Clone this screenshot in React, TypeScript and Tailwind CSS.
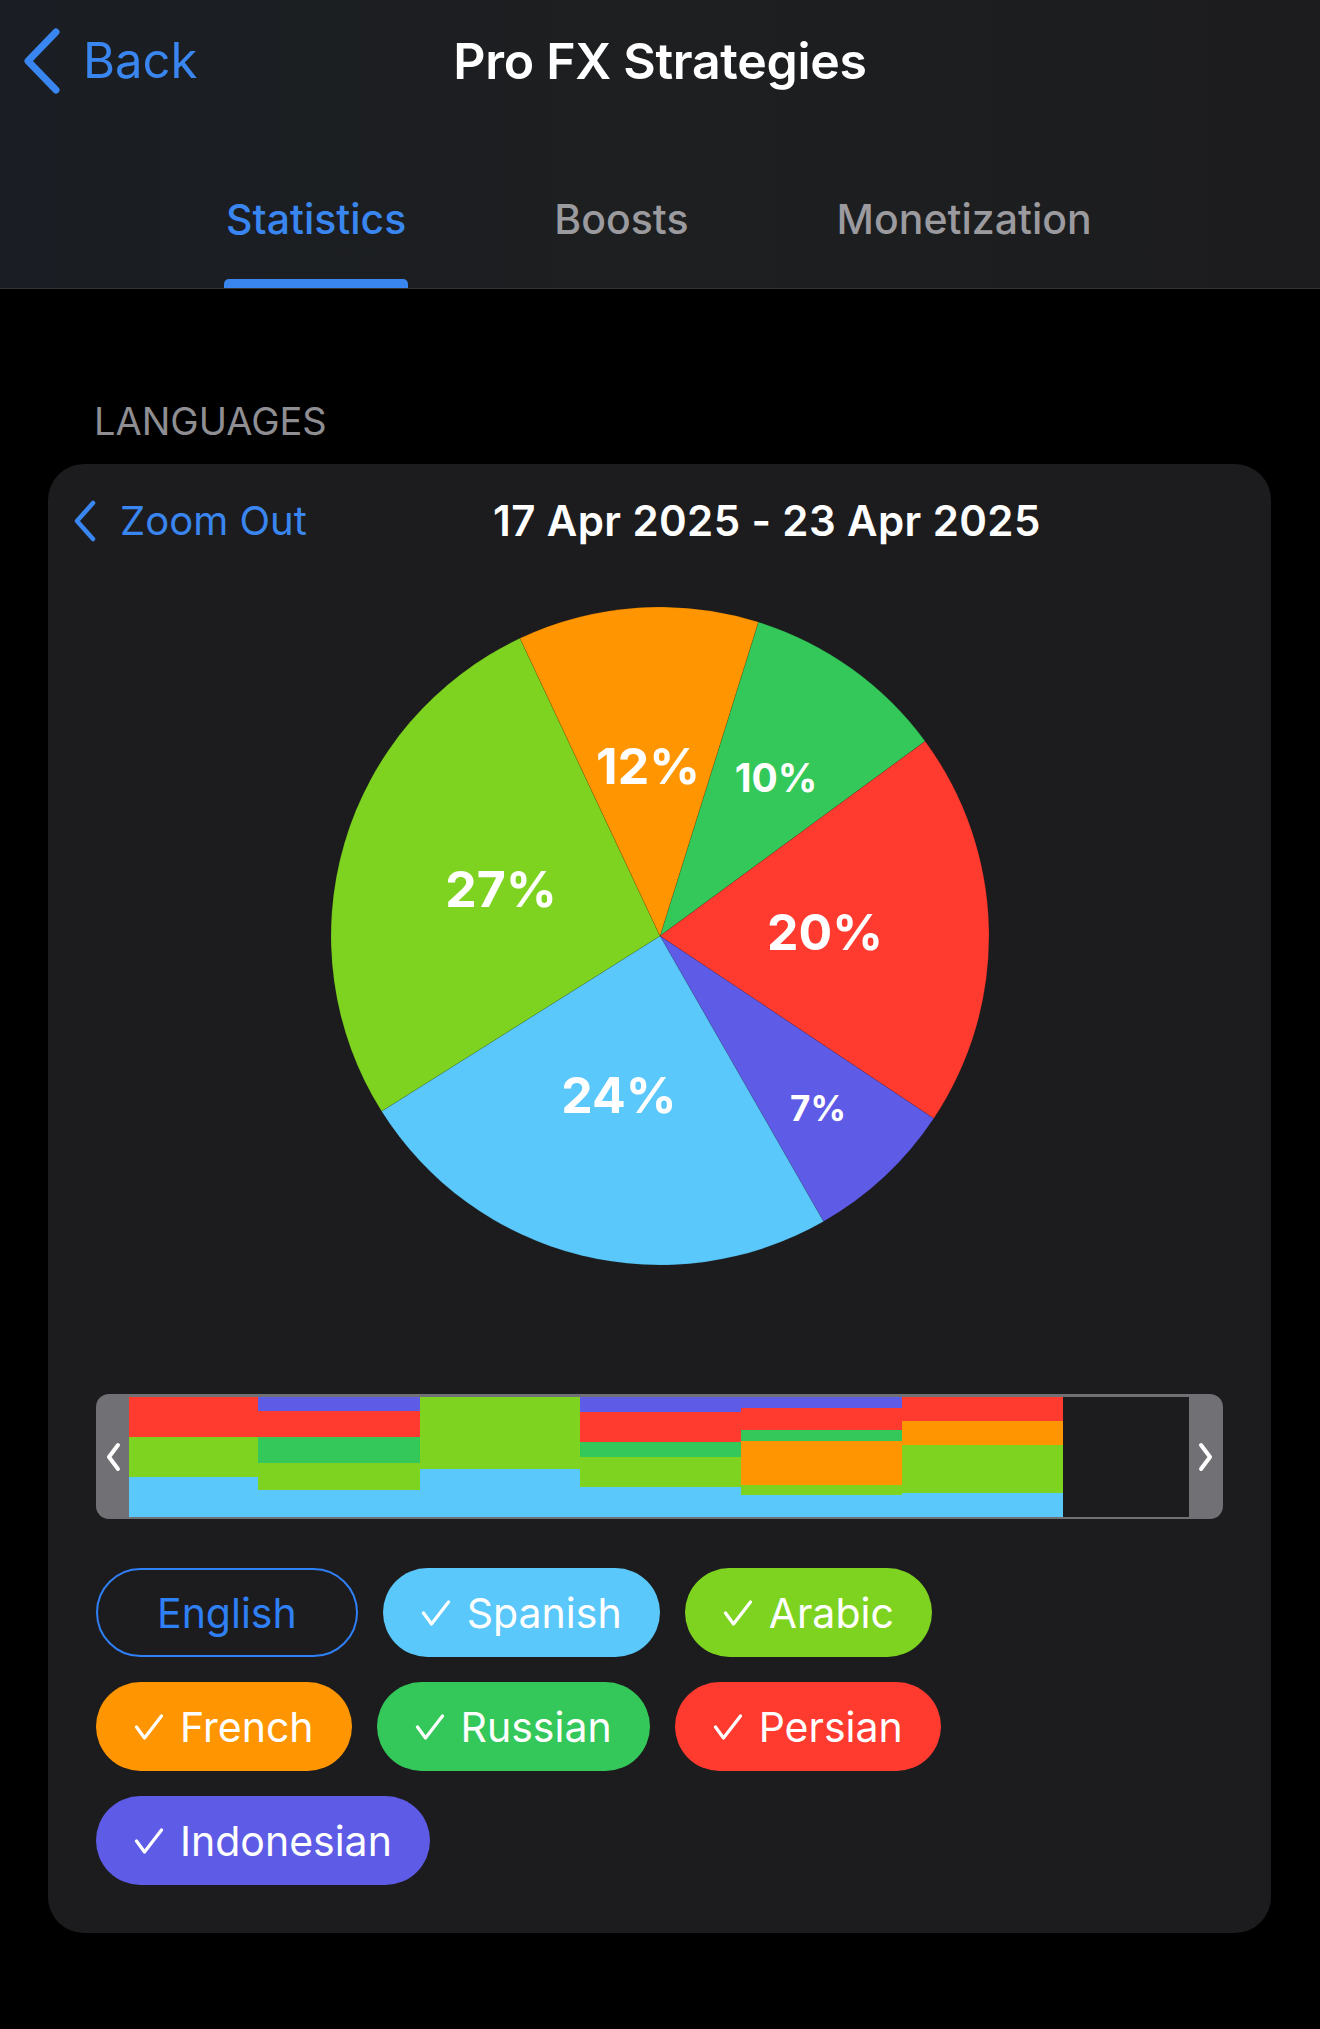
import React from "react";

const slices = [
  { color: "#34C759", from: 17.4, to: 53.7 },
  { color: "#FF3B30", from: 53.7, to: 123.7 },
  { color: "#5E5CE6", from: 123.7, to: 150.2 },
  { color: "#5AC8FA", from: 150.2, to: 237.8 },
  { color: "#7ED321", from: 237.8, to: 334.8 },
  { color: "#FF9500", from: 334.8, to: 377.4 },
];

const labels = [
  { text: "12%", x: -12, y: -152.5, size: 50 },
  { text: "10%", x: 116, y: -144.5, size: 39 },
  { text: "27%", x: -159, y: -29.5, size: 50 },
  { text: "20%", x: 165, y: 13.5, size: 50 },
  { text: "24%", x: -41, y: 176.5, size: 50 },
  { text: "7%", x: 158, y: 184.5, size: 35 },
];

const R = 329;

const point = (deg: number) => {
  const rad = (deg * Math.PI) / 180;
  return [R * Math.sin(rad), -R * Math.cos(rad)];
};

const slicePath = (from: number, to: number) => {
  const [x1, y1] = point(from);
  const [x2, y2] = point(to);
  const large = to - from > 180 ? 1 : 0;
  return `M0 0 L${x1} ${y1} A${R} ${R} 0 ${large} 1 ${x2} ${y2} Z`;
};

const C = {
  purple: "#5E5CE6",
  red: "#FF3B30",
  green: "#34C759",
  lime: "#7ED321",
  blue: "#5AC8FA",
  orange: "#FF9500",
};

const columns: { width: number; parts: [string, number][] }[] = [
  { width: 129, parts: [[C.red, 40], [C.lime, 40], [C.blue, 40]] },
  { width: 162, parts: [[C.purple, 14], [C.red, 26], [C.green, 26], [C.lime, 27], [C.blue, 27]] },
  { width: 160, parts: [[C.lime, 72], [C.blue, 48]] },
  { width: 161, parts: [[C.purple, 15], [C.red, 30], [C.green, 15], [C.lime, 30], [C.blue, 30]] },
  { width: 161, parts: [[C.purple, 11], [C.red, 22], [C.green, 11], [C.orange, 44], [C.lime, 10], [C.blue, 22]] },
  { width: 161, parts: [[C.red, 24], [C.orange, 24], [C.lime, 48], [C.blue, 24]] },
];

const chips = [
  [
    { name: "English", bg: "", selected: false },
    { name: "Spanish", bg: "bg-[#5AC8FA]", selected: true },
    { name: "Arabic", bg: "bg-[#7ED321]", selected: true },
  ],
  [
    { name: "French", bg: "bg-[#FF9500]", selected: true },
    { name: "Russian", bg: "bg-[#34C759]", selected: true },
    { name: "Persian", bg: "bg-[#FF3B30]", selected: true },
  ],
  [{ name: "Indonesian", bg: "bg-[#5E5CE6]", selected: true }],
];

const Chevron = ({ className, points, width, height, stroke }: { className: string; points: string; width: number; height: number; stroke: number }) => (
  <svg className={className} width={width} height={height} viewBox={`0 0 ${width} ${height}`} fill="none">
    <polyline points={points} stroke="currentColor" strokeWidth={stroke} strokeLinecap="round" strokeLinejoin="round" />
  </svg>
);

const Check = () => (
  <svg width={30} height={26} viewBox="0 0 30 26" fill="none" className="shrink-0">
    <polyline points="2.5,13 10.5,24 27.5,2" stroke="white" strokeWidth={3.2} strokeLinecap="round" strokeLinejoin="round" />
  </svg>
);

export default function App() {
  return (
    <div className="min-h-screen bg-black font-[family-name:Inter,'Liberation_Sans',sans-serif] text-white">
      {/* header */}
      <div className="bg-gradient-to-r from-[#1a1d23] via-[#1d1f20] to-[#1c1c1e] border-b border-[#333336]">
        <div className="grid h-[122px] grid-cols-[1fr_auto_1fr] items-center">
          <div className="flex items-center pl-[22px] text-[#3a86f0]">
            <Chevron className="shrink-0" width={40} height={66} points="34,4 6,33 34,62" stroke={7} />
            <span className="ml-[21px] text-[49px] leading-[60px]">Back</span>
          </div>
          <div className="text-[50px] font-semibold leading-[60px] tracking-[-0.3px]">Pro FX Strategies</div>
          <div />
        </div>
        <div className="flex h-[166px] items-end gap-[148px] pl-[226px]">
          <div className="flex flex-col items-center">
            <span className="text-[41px] font-medium leading-[50px] text-[#3a86f0]">Statistics</span>
            <div className="mt-[35px] h-[9px] w-[calc(100%+4px)] rounded-t-[5px] bg-[#3a86f0]" />
          </div>
          <div className="flex flex-col items-center">
            <span className="text-[41px] font-medium leading-[50px] text-[#9a9a9f]">Boosts</span>
            <div className="mt-[35px] h-[9px]" />
          </div>
          <div className="flex flex-col items-center">
            <span className="text-[41px] font-medium leading-[50px] text-[#9a9a9f]">Monetization</span>
            <div className="mt-[35px] h-[9px]" />
          </div>
        </div>
      </div>

      <div className="mt-[110px] mb-[21px] pl-[94px] text-[38px] leading-[44px] text-[#8e8e93]">LANGUAGES</div>

      {/* card */}
      <div className="ml-[48px] w-[1223px] rounded-[36px] bg-[#1c1c1e] px-[48px] pt-[27px] pb-[48px]">
        <div className="-mx-[24px] flex h-[60px] items-center">
          <Chevron className="shrink-0 text-[#3a86f0]" width={26} height={44} points="21,4 5,22 21,40" stroke={4.5} />
          <span className="ml-[22px] text-[40px] leading-[48px] text-[#3a86f0]">Zoom Out</span>
          <span className="flex-1 pr-[20px] text-center text-[42px] font-semibold leading-[48px] tracking-[0.4px]">17 Apr 2025 - 23 Apr 2025</span>
        </div>

        <div className="mt-[56px] flex justify-center">
          <svg width={658} height={658} viewBox="-329 -329 658 658">
            {slices.map((s) => (
              <path key={s.color} d={slicePath(s.from, s.to)} fill={s.color} stroke="rgba(0,0,0,0.12)" strokeWidth={0.8} />
            ))}
            {labels.map((l) => (
              <text key={l.text} x={l.x} y={l.y} textAnchor="middle" fill="#fff" fontSize={l.size} fontWeight={700} fontFamily="Inter, 'Liberation Sans', sans-serif">
                {l.text}
              </text>
            ))}
          </svg>
        </div>

        {/* mini chart */}
        <div className="mt-[129px] flex h-[125px] overflow-hidden rounded-[13px] bg-[#707075]">
          <div className="flex w-[33px] shrink-0 items-center justify-center text-white">
            <Chevron className="" width={18} height={32} points="14,4 5,16 14,28" stroke={4} />
          </div>
          <div className="mt-[3px] mb-[2px] flex flex-1 bg-[#1c1c1e]">
            {columns.map((col, i) => (
              <div key={i} className="flex shrink-0 flex-col" style={{ width: col.width }}>
                {col.parts.map(([color, h], j) => (
                  <div key={j} style={{ height: h, background: color }} />
                ))}
              </div>
            ))}
          </div>
          <div className="flex w-[34px] shrink-0 items-center justify-center text-white">
            <Chevron className="" width={18} height={32} points="4,4 13,16 4,28" stroke={4} />
          </div>
        </div>

        {/* chips */}
        <div className="mt-[49px] flex flex-col gap-[25px]">
          {chips.map((row, i) => (
            <div key={i} className="flex gap-[25px]">
              {row.map((chip) =>
                chip.selected ? (
                  <div key={chip.name} className={`flex h-[89px] items-center gap-[16px] rounded-full px-[38px] text-[41px] leading-[50px] text-white ${chip.bg}`}>
                    <Check />
                    <span>{chip.name}</span>
                  </div>
                ) : (
                  <div key={chip.name} className="flex h-[89px] items-center rounded-full border-[2.5px] border-[#2f7ff5] px-[59px] text-[41px] leading-[50px] text-[#2f7ff5]">
                    {chip.name}
                  </div>
                )
              )}
            </div>
          ))}
        </div>
      </div>
      <div className="h-[96px]" />
    </div>
  );
}
